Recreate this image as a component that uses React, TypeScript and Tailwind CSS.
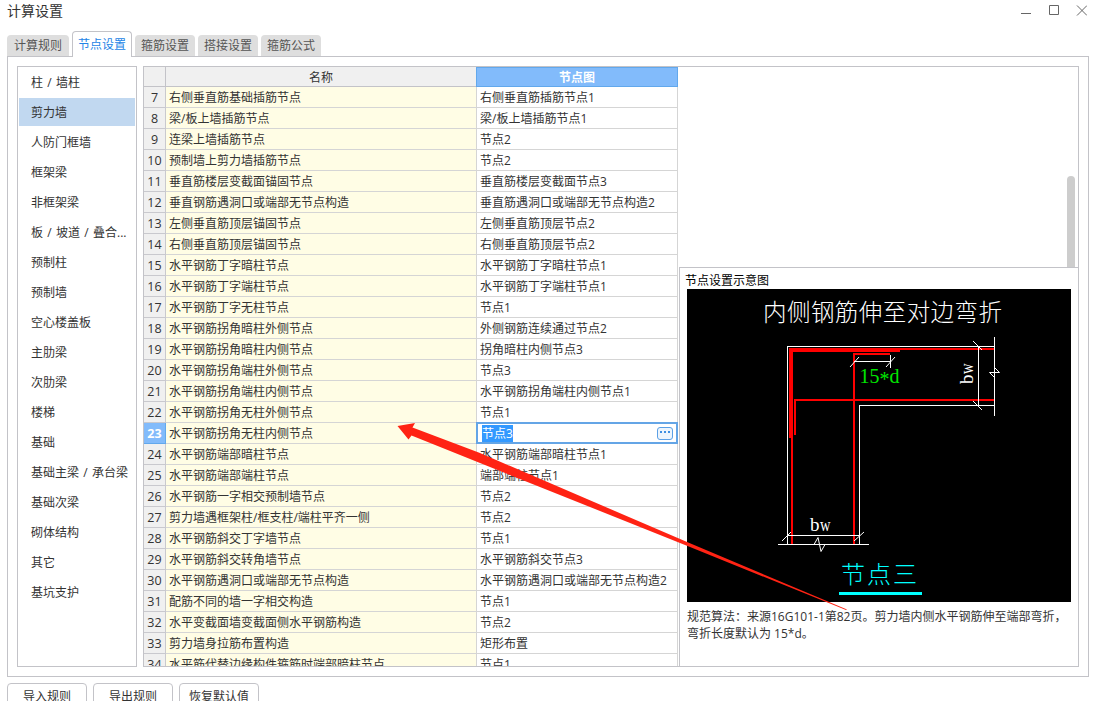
import React from 'react';

const tabs = ['计算规则', '节点设置', '箍筋设置', '搭接设置', '箍筋公式'];

const categories = [
  '柱 / 墙柱', '剪力墙', '人防门框墙', '框架梁', '非框架梁', '板 / 坡道 / 叠合...', '预制柱', '预制墙', '空心楼盖板',
  '主肋梁', '次肋梁', '楼梯', '基础', '基础主梁 / 承台梁', '基础次梁', '砌体结构', '其它', '基坑支护',
];

const rows: [number, string, string][] = [
  [7, '右侧垂直筋基础插筋节点', '右侧垂直筋插筋节点1'],
  [8, '梁/板上墙插筋节点', '梁/板上墙插筋节点1'],
  [9, '连梁上墙插筋节点', '节点2'],
  [10, '预制墙上剪力墙插筋节点', '节点2'],
  [11, '垂直筋楼层变截面锚固节点', '垂直筋楼层变截面节点3'],
  [12, '垂直钢筋遇洞口或端部无节点构造', '垂直筋遇洞口或端部无节点构造2'],
  [13, '左侧垂直筋顶层锚固节点', '左侧垂直筋顶层节点2'],
  [14, '右侧垂直筋顶层锚固节点', '右侧垂直筋顶层节点2'],
  [15, '水平钢筋丁字暗柱节点', '水平钢筋丁字暗柱节点1'],
  [16, '水平钢筋丁字端柱节点', '水平钢筋丁字端柱节点1'],
  [17, '水平钢筋丁字无柱节点', '节点1'],
  [18, '水平钢筋拐角暗柱外侧节点', '外侧钢筋连续通过节点2'],
  [19, '水平钢筋拐角暗柱内侧节点', '拐角暗柱内侧节点3'],
  [20, '水平钢筋拐角端柱外侧节点', '节点3'],
  [21, '水平钢筋拐角端柱内侧节点', '水平钢筋拐角端柱内侧节点1'],
  [22, '水平钢筋拐角无柱外侧节点', '节点1'],
  [23, '水平钢筋拐角无柱内侧节点', '节点3'],
  [24, '水平钢筋端部暗柱节点', '水平钢筋端部暗柱节点1'],
  [25, '水平钢筋端部端柱节点', '端部端柱节点1'],
  [26, '水平钢筋一字相交预制墙节点', '节点2'],
  [27, '剪力墙遇框架柱/框支柱/端柱平齐一侧', '节点2'],
  [28, '水平钢筋斜交丁字墙节点', '节点1'],
  [29, '水平钢筋斜交转角墙节点', '水平钢筋斜交节点3'],
  [30, '水平钢筋遇洞口或端部无节点构造', '水平钢筋遇洞口或端部无节点构造2'],
  [31, '配筋不同的墙一字相交构造', '节点1'],
  [32, '水平变截面墙变截面侧水平钢筋构造', '节点2'],
  [33, '剪力墙身拉筋布置构造', '矩形布置'],
  [34, '水平筋代替边缘构件箍筋时端部暗柱节点', '节点1'],
];

function WindowButtons() {
  return (
    <svg className="mt-1 mr-[11px] h-3 w-[66px]" viewBox="1021 4 66 12" fill="none" stroke="#666">
      <path d="M1021 13.500h10" />
      <path d="M1049.500 5.500h9v9h-9z" />
      <path d="M1077 5.500l10 10M1087 5.500l-10 10" />
    </svg>
  );
}

function WallWidthLabel({ transform }: { transform: string }) {
  return (
    <g transform={transform} fill="#fff" fontSize="19" className="font-['Liberation_Serif',serif]">
      <text x="0" y="0">b</text>
      <text x="10" y="0" textLength="10.500" lengthAdjust="spacingAndGlyphs">w</text>
    </g>
  );
}

function Diagram() {
  return (
    <svg className="block h-[313px] w-[384px] bg-black" viewBox="687 289 384 313">
      <g fill="#ff0000" shapeRendering="crispEdges">
        <path d="M789 348h205v2h-94v2H793v86h-4z" />
        <path d="M791 438h2v106h-2z" />
        <path d="M853 353h37v2h-35v189h-2z" />
        <path d="M794 399h200v2H796v34h-2z" />
      </g>
      <g fill="none" stroke="#fff" shapeRendering="crispEdges">
        <path d="M787.500 544V346.500H994" />
        <path d="M859.500 544V405.500H994" />
        <path d="M994.500 337v79" />
        <path d="M778 544.500h91" />
        <path d="M787 535.500h73" />
        <path d="M854 361.500h37" />
        <path d="M890.500 355v13" />
        <path d="M978.500 346v60" />
      </g>
      <g fill="none" stroke="#fff" strokeWidth="1">
        <path d="M782 541l9-9M854 541l10-9M850 367l9-10M886 367l9-10M973 341l9 9M973 401l9 9" />
        <path d="M994.500 367.500l5 5h-10l5 5" />
        <path d="M814 544.500l4-7 3 14 4-7" />
      </g>
      <text x="763" y="320.500" textLength="239" fontSize="23.500" fill="#fff" className="font-['Noto_Sans_CJK_SC',sans-serif] font-extralight">内侧钢筋伸至对边弯折</text>
      <text x="859.500" y="383" fontSize="20" fill="#00e600" className="font-['Liberation_Serif',serif]">
        15<tspan dy="3">*</tspan><tspan dy="-3">d</tspan>
      </text>
      <WallWidthLabel transform="translate(810 531)" />
      <WallWidthLabel transform="translate(973 384) rotate(-90)" />
      <text x="841" y="582.500" textLength="76" fontSize="24" fill="#00ffff" className="font-['Noto_Sans_CJK_SC',sans-serif] font-extralight">节点三</text>
      <path d="M839 592h83v3h-83z" fill="#00ffff" />
    </svg>
  );
}

function MoreButton() {
  return (
    <span className="flex h-[13px] w-4 items-center justify-center gap-0.5 rounded-[3px] border border-[#5ba0e6] bg-[#edf5fd] pb-0.5">
      <i className="size-0.5 bg-[#3d8ee2]" />
      <i className="size-0.5 bg-[#3d8ee2]" />
      <i className="size-0.5 bg-[#3d8ee2]" />
    </span>
  );
}

function NodeTable() {
  return (
    <div className="w-[534px] shrink-0 overflow-hidden">
      <div className="flex h-5 leading-[21px]">
        <div className="w-[22px] border-r border-b border-[#c3c3c8] bg-[#f0f0f0]" />
        <div className="w-[310px] border-b border-[#c3c3c8] bg-[#f0f0f0] text-center">名称</div>
        <div className="w-[202px] border border-[#62a8ec] bg-[#82bbfb] text-center leading-[20px] font-bold text-white">节点图</div>
      </div>
      {rows.map(([id, name, value]) => {
        const selected = id === 23;
        return (
          <div key={id} className="flex h-[21px] leading-[21px] whitespace-nowrap">
            <div
              className={
                selected
                  ? 'w-[22px] border-r border-b border-[#62a8ec] bg-[#82bbfb] text-center text-[12.500px] font-bold text-white'
                  : 'w-[22px] border-r border-b border-[#c9c9ce] bg-[#f0f0f0] text-center text-[12.500px]'
              }
            >
              {id}
            </div>
            <div className="w-[311px] border-r border-b border-[#d5d5d5] bg-[#fffde5] pl-[3px]">{name}</div>
            {selected ? (
              <div className="-mt-px -ml-px flex h-[22px] w-[202px] items-center justify-between border-2 border-[#64a5e6] bg-white pr-[3px] pl-1">
                <span className="h-[17px] w-[31px] bg-[#3399ff] leading-[17px] text-white">节点3</span>
                <MoreButton />
              </div>
            ) : (
              <div className="w-[201px] border-r border-b border-[#d5d5d5] pl-[3px]">{value}</div>
            )}
          </div>
        );
      })}
    </div>
  );
}

export default function App() {
  return (
    <div className="relative flex h-[701px] w-[1098px] flex-col overflow-hidden bg-white font-['Open_Sans','Noto_Sans_CJK_SC',sans-serif] text-[12px] text-[#333]">
      <header className="flex h-[31px] shrink-0 items-start justify-between">
        <h1 className="pl-[7px] text-[14px] leading-[21px]">计算设置</h1>
        <WindowButtons />
      </header>

      <nav className="z-10 -mb-px flex h-[26px] shrink-0 items-end gap-[3px] pl-[7px]">
        {tabs.map((tab) =>
          tab === '节点设置' ? (
            <div key={tab} className="h-[26px] w-[60px] rounded-t border border-b-0 border-[#c3c3c8] bg-white text-center leading-[26px] whitespace-nowrap text-[#2384e6]">
              {tab}
            </div>
          ) : (
            <div key={tab} className="mb-px h-[21px] w-[60px] rounded-t bg-[#dedede] text-center leading-[21px] whitespace-nowrap text-[#555] first:w-[62px]">
              {tab}
            </div>
          ),
        )}
      </nav>

      <main className="ml-[7px] flex h-[621px] w-[1082px] shrink-0 gap-1.5 border border-[#c3c3c8] p-[9px]">
        <aside className="flex w-[120px] shrink-0 flex-col gap-0.5 border border-[#c3c3c8] p-px [word-spacing:1.2px]">
          {categories.map((c) => (
            <div key={c} className={c === '剪力墙' ? 'h-7 bg-[#c1d8f0] pl-3 leading-[29px] whitespace-nowrap' : 'h-7 pl-3 leading-[29px] whitespace-nowrap'}>
              {c}
            </div>
          ))}
        </aside>

        <section className="flex w-[936px] overflow-hidden border border-[#c3c3c8]">
          <NodeTable />
          <div className="flex flex-1 flex-col pl-px">
            <div className="flex h-[200px] shrink-0 items-end justify-end pr-[3px]">
              <div className="h-[91px] w-2 rounded-t bg-[#cdcdcd]" />
            </div>
            <div className="flex flex-1 flex-col border-t border-l border-[#c3c3c8] pl-[7px]">
              <h2 className="-ml-0.5 h-[21px] leading-[26px] text-black">节点设置示意图</h2>
              <Diagram />
              <p className="pt-[6px] leading-[17px] whitespace-nowrap">
                规范算法：来源16G101-1第82页。剪力墙内侧水平钢筋伸至端部弯折，
                <br />
                弯折长度默认为 15*d。
              </p>
            </div>
          </div>
        </section>
      </main>

      <footer className="flex gap-1.5 pt-1.5 pl-[7px]">
        {['导入规则', '导出规则', '恢复默认值'].map((b) => (
          <button key={b} className="h-[27px] w-20 rounded border border-[#c3c3c8] bg-white leading-[25px]">
            {b}
          </button>
        ))}
      </footer>

      <svg className="pointer-events-none absolute top-0 left-0 z-20 h-[701px] w-[1098px]" viewBox="0 0 1098 701">
        <path d="M397.500 426L415 423L412.500 427.500L480 453L690 543.300L847 609.500L846 610L690 547L480 463L411.500 435.500L408.500 439.500Z" fill="#ff2314" />
      </svg>
    </div>
  );
}
